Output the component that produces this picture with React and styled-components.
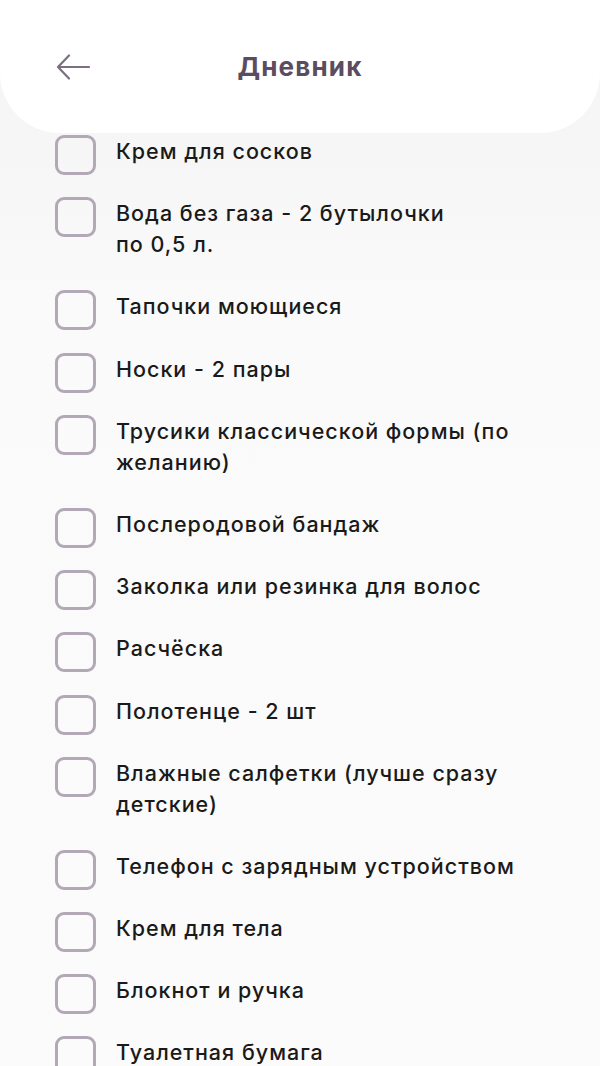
import React from "react";
import styled, { createGlobalStyle } from "styled-components";

const Global = createGlobalStyle`
  html, body { margin: 0; padding: 0; background: #f9f9f9; }
  body { font-family: Inter, "Noto Sans", "Liberation Sans", sans-serif; overflow: hidden; }
  * { box-sizing: border-box; }
`;

const Page = styled.div`
  width: 600px;
  min-height: 1066px;
  background: linear-gradient(#f5f5f5 0px, #f6f6f6 150px, #fafafa 300px, #fbfbfb 100%);
`;

const Header = styled.header`
  height: 133px;
  background: #ffffff;
  border-radius: 0 0 60px 60px;
  display: grid;
  grid-template-columns: 1fr auto 1fr;
  align-items: center;
  padding: 0 56px;
`;

const BackButton = styled.button`
  justify-self: start;
  width: 34px;
  height: 28px;
  padding: 0;
  border: 0;
  background: none;
  display: flex;
  align-items: center;
  color: #7b6f7f;
`;

const Title = styled.h1`
  margin: 0;
  font-family: Inter, "Noto Sans", sans-serif;
  font-weight: 700;
  font-size: 26px;
  color: #5b4d5f;
  letter-spacing: 1.2px;
`;

const List = styled.ul`
  list-style: none;
  margin: 0;
  padding: 3px 0 0 55px;
  display: flex;
  flex-direction: column;
  gap: 31.2px;
`;

const Row = styled.li`
  display: flex;
  align-items: flex-start;
  gap: 20px;
`;

const Box = styled.span`
  flex: none;
  width: 41px;
  height: 40px;
  margin: -1px 0 -8px;
  border: 3px solid #b3a8b6;
  border-radius: 9px;
  background: transparent;
`;

const Label = styled.span`
  font-size: 21.5px;
  line-height: 31px;
  font-weight: 500;
  color: #1a1a1a;
  white-space: pre-line;
  letter-spacing: 1px;
`;

const items = [
  "Крем для сосков",
  "Вода без газа - 2 бутылочки\nпо 0,5 л.",
  "Тапочки моющиеся",
  "Носки - 2 пары",
  "Трусики классической формы (по\nжеланию)",
  "Послеродовой бандаж",
  "Заколка или резинка для волос",
  "Расчёска",
  "Полотенце - 2 шт",
  "Влажные салфетки (лучше сразу\nдетские)",
  "Телефон с зарядным устройством",
  "Крем для тела",
  "Блокнот и ручка",
  "Туалетная бумага",
];

export default function App() {
  return (
    <Page>
      <Global />
      <Header>
        <BackButton aria-label="Назад">
          <svg width="34" height="26" viewBox="0 0 34 26" fill="none">
            <path d="M2 13H33M13 1.5L2 13L13 24.5" stroke="currentColor" strokeWidth="2.2" strokeLinecap="round" strokeLinejoin="round" />
          </svg>
        </BackButton>
        <Title>Дневник</Title>
        <span />
      </Header>
      <List>
        {items.map((t) => (
          <Row key={t}>
            <Box />
            <Label>{t}</Label>
          </Row>
        ))}
      </List>
    </Page>
  );
}
